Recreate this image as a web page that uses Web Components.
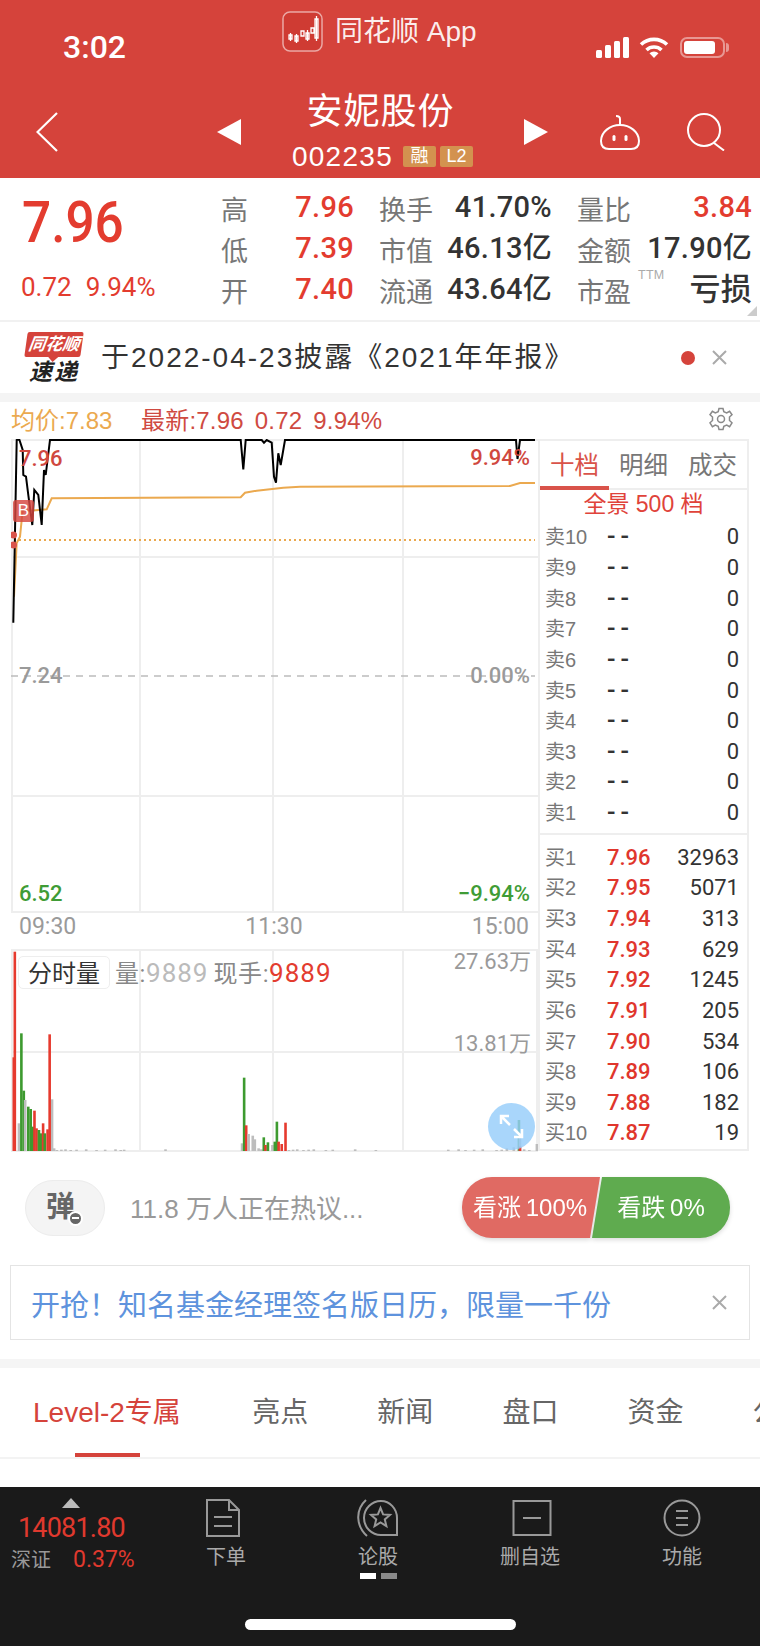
<!DOCTYPE html>
<html lang="zh">
<head>
<meta charset="utf-8">
<title>安妮股份</title>
<style>
    html, body {
        margin: 0;
        background: #fff;
    }
    body {
        width: 760px;
        height: 1646px;
        overflow: hidden;
        display: flex;
        flex-direction: column;
        font-family: "Liberation Sans", "Noto Sans CJK SC", sans-serif;
    }
</style>
</head>
<body>
<stock-header name="安妮股份" code="002235"></stock-header>
<quote-panel>
    <quote-cell label="高" red>7.96</quote-cell>
    <quote-cell label="换手">41.70%</quote-cell>
    <quote-cell label="量比" red>3.84</quote-cell>
    <quote-cell label="低" red>7.39</quote-cell>
    <quote-cell label="市值">46.13亿</quote-cell>
    <quote-cell label="金额">17.90亿</quote-cell>
    <quote-cell label="开" red>7.40</quote-cell>
    <quote-cell label="流通">43.64亿</quote-cell>
    <quote-cell label="市盈" ttm>亏损</quote-cell>
</quote-panel>
<news-strip>于2022-04-23披露《2021年年报》</news-strip>
<chart-header></chart-header>
<chart-row>
    <time-chart slot="chart"></time-chart>
    <order-book slot="book">
        <book-row slot="sell" label="卖10" price="--">0</book-row>
        <book-row slot="sell" label="卖9" price="--">0</book-row>
        <book-row slot="sell" label="卖8" price="--">0</book-row>
        <book-row slot="sell" label="卖7" price="--">0</book-row>
        <book-row slot="sell" label="卖6" price="--">0</book-row>
        <book-row slot="sell" label="卖5" price="--">0</book-row>
        <book-row slot="sell" label="卖4" price="--">0</book-row>
        <book-row slot="sell" label="卖3" price="--">0</book-row>
        <book-row slot="sell" label="卖2" price="--">0</book-row>
        <book-row slot="sell" label="卖1" price="--">0</book-row>
        <book-row slot="buy" label="买1" price="7.96">32963</book-row>
        <book-row slot="buy" label="买2" price="7.95">5071</book-row>
        <book-row slot="buy" label="买3" price="7.94">313</book-row>
        <book-row slot="buy" label="买4" price="7.93">629</book-row>
        <book-row slot="buy" label="买5" price="7.92">1245</book-row>
        <book-row slot="buy" label="买6" price="7.91">205</book-row>
        <book-row slot="buy" label="买7" price="7.90">534</book-row>
        <book-row slot="buy" label="买8" price="7.89">106</book-row>
        <book-row slot="buy" label="买9" price="7.88">182</book-row>
        <book-row slot="buy" label="买10" price="7.87">19</book-row>
    </order-book>
</chart-row>
<vote-bar></vote-bar>
<promo-banner>开抢&#65281;知名基金经理签名版日历&#65292;限量一千份</promo-banner>
<detail-tabs>
    <detail-tab active>Level-2专属</detail-tab>
    <detail-tab>亮点</detail-tab>
    <detail-tab>新闻</detail-tab>
    <detail-tab>盘口</detail-tab>
    <detail-tab>资金</detail-tab>
    <detail-tab>公司</detail-tab>
</detail-tabs>
<bottom-dock>
    <dock-item label="下单">
        <svg style="margin-right:6px" width="36" height="38" viewBox="0 0 36 38" fill="none" stroke="#999" stroke-width="2">
            <path d="M2 1H24L34 11V37H2Z"/><path d="M24 1V11H34"/><path d="M9 18H27M9 27H27"/>
        </svg>
    </dock-item>
    <dock-item label="论股" paged>
        <svg width="42" height="40" viewBox="0 0 42 40" fill="none" stroke="#999" stroke-width="2">
            <path d="M24 3C33 3 40 11 40 20V37H24A17 17 0 0 1 24 3Z"/>
            <path d="M9 2C-2 12 -1 28 10 38"/>
            <path d="M23.5 10L26.1 16.4L33 16.9L27.8 21.4L29.4 28.1L23.5 24.5L17.6 28.1L19.2 21.4L14 16.9L20.9 16.4Z"/>
        </svg>
    </dock-item>
    <dock-item label="删自选">
        <svg style="margin-left:4px" width="40" height="38" viewBox="0 0 40 38" fill="none" stroke="#999" stroke-width="2">
            <rect x="1.5" y="2" width="37" height="34"/><path d="M11 19H29"/>
        </svg>
    </dock-item>
    <dock-item label="功能">
        <svg width="38" height="38" viewBox="0 0 38 38" fill="none" stroke="#999" stroke-width="2">
            <circle cx="19" cy="19" r="17.5"/><path d="M13 12H25M13 19H25M13 26H25"/>
        </svg>
    </dock-item>
</bottom-dock>

<script>
class StockHeader extends HTMLElement {
    constructor() {
        super();
        this.attachShadow({ mode: 'open' });
        const name = this.getAttribute('name');
        const code = this.getAttribute('code');
        this.shadowRoot.innerHTML = `
            <style>
                :host {
                    display: block;
                    height: 178px;
                    background: #d5433b;
                    color: #fff;
                    flex: none;
                }
                .status {
                    height: 91px;
                    display: flex;
                    box-sizing: border-box;
                    padding-left: 63px;
                    position: relative;
                }
                .time {
                    font: 500 32px/32px Roboto, sans-serif;
                    margin-top: 31px;
                    width: 219px;
                }
                .app {
                    display: flex;
                    align-items: flex-start;
                    gap: 12px;
                    margin-top: 11px;
                    width: 314px;
                    font-size: 28px;
                    line-height: 42px;
                    color: rgba(255,255,255,.92);
                }
                .sys {
                    display: flex;
                    align-items: center;
                    gap: 10px;
                    height: 22px;
                    margin-top: 36px;
                }
                .bars {
                    display: flex;
                    align-items: flex-end;
                    gap: 3px;
                    height: 21px;
                }
                .bars i {
                    width: 6px;
                    background: #fff;
                    border-radius: 1.5px;
                }
                .battery {
                    width: 45px;
                    height: 21px;
                    box-sizing: border-box;
                    border: 2px solid rgba(255,255,255,.45);
                    border-radius: 7px;
                    padding: 2px;
                    margin-left: 1px;
                    position: relative;
                }
                .battery i {
                    display: block;
                    height: 100%;
                    width: 85%;
                    background: #fff;
                    border-radius: 3px;
                }
                .battery::after {
                    content: "";
                    position: absolute;
                    right: -6px;
                    top: 4px;
                    width: 3px;
                    height: 9px;
                    background: rgba(255,255,255,.45);
                    border-radius: 0 3px 3px 0;
                }
                .nav {
                    height: 82px;
                    display: flex;
                    align-items: center;
                    padding-left: 36px;
                }
                .back { margin-right: 159px; }
                .mid {
                    width: 283px;
                    display: flex;
                    flex-direction: column;
                    align-items: center;
                    padding-bottom: 6px;
                }
                .name {
                    font-size: 36px;
                    line-height: 42px;
                    letter-spacing: 1px;
                    margin-right: 4px;
                }
                .code {
                    display: flex;
                    align-items: center;
                    gap: 4px;
                    margin-top: 13px;
                    height: 22px;
                    font-size: 28px;
                    letter-spacing: 1.3px;
                }
                .code span {
                    margin-right: 6px;
                }
                .code b {
                    width: 33px;
                    height: 21px;
                    background: #d3924f;
                    border-radius: 2px;
                    font-size: 18px;
                    line-height: 21px;
                    font-weight: normal;
                    letter-spacing: 0;
                    text-align: center;
                }
                .robot { margin-left: 52px; }
                .search { margin-left: 46px; }
            </style>
            <div class="status">
                <div class="time">3:02</div>
                <div class="app">
                    <svg width="41" height="41" viewBox="0 0 41 41">
                        <rect x="1" y="1" width="39" height="39" rx="7" fill="#cf3b33" stroke="rgba(255,255,255,.55)" stroke-width="1.5"/>
                        <g fill="none" stroke="#fff" stroke-width="1.3">
                            <path d="M7 24h3v4H7zM8.5 22v8M13 25h3v5h-3zM14.5 23v9M19 20h3v5h-3zM24 22h3v6h-3zM25.5 19v11M29 17h3v5h-3zM33 8h3v19h-3zM34.5 5v25"/>
                        </g>
                    </svg>
                    <span>同花顺 App</span>
                </div>
                <div class="sys">
                    <div class="bars"><i style="height:8px"></i><i style="height:13px"></i><i style="height:17px"></i><i style="height:21px"></i></div>
                    <svg width="30" height="22" viewBox="0 0 30 22" fill="none" stroke="#fff" stroke-width="3.6">
                        <path d="M2 8.5A19 19 0 0 1 28 8.5"/>
                        <path d="M7.5 14A11 11 0 0 1 22.5 14"/>
                        <path d="M15 22L10.5 17.3A6.5 6.5 0 0 1 19.5 17.3Z" fill="#fff" stroke="none"/>
                    </svg>
                    <div class="battery"><i></i></div>
                </div>
            </div>
            <div class="nav">
                <svg class="back" width="22" height="40" viewBox="0 0 22 40" fill="none" stroke="#fff" stroke-width="2.2">
                    <path d="M21 1L1.5 20L21 39"/>
                </svg>
                <svg width="24" height="26" viewBox="0 0 24 26"><path d="M24 0V26L0 13Z" fill="#fff"/></svg>
                <div class="mid">
                    <div class="name">${name}</div>
                    <div class="code"><span>${code}</span><b>融</b><b>L2</b></div>
                </div>
                <svg width="24" height="26" viewBox="0 0 24 26"><path d="M0 0V26L24 13Z" fill="#fff"/></svg>
                <svg class="robot" width="40" height="36" viewBox="0 0 40 36" fill="none" stroke="#fff" stroke-width="2">
                    <path d="M20 11C30 11 39 18 39 27C39 32 36 35 31 35H9C4 35 1 32 1 27C1 18 10 11 20 11Z"/>
                    <path d="M20 11V5C20 3 18 2 16 2"/>
                    <rect x="12.5" y="21" width="3" height="6" rx="1.5" fill="#fff" stroke="none"/>
                    <rect x="24.5" y="21" width="3" height="6" rx="1.5" fill="#fff" stroke="none"/>
                </svg>
                <svg class="search" width="39" height="38" viewBox="0 0 39 38" fill="none" stroke="#fff" stroke-width="2">
                    <circle cx="18" cy="17" r="16"/><path d="M28 30L38 37.5"/>
                </svg>
            </div>
        `;
    }
}

class QuotePanel extends HTMLElement {
    constructor() {
        super();
        this.attachShadow({ mode: 'open' });
        this.shadowRoot.innerHTML = `
            <style>
                :host {
                    display: flex;
                    height: 144px;
                    box-sizing: border-box;
                    padding: 9px 0 0 22px;
                    border-bottom: 2px solid #f1f1f1;
                    flex: none;
                    position: relative;
                }
                .now {
                    width: 199px;
                    color: #e33c2f;
                    flex: none;
                }
                .big {
                    font: 500 58px/60px Roboto, sans-serif;
                    margin-top: 5px;
                    transform: scaleX(.885);
                    transform-origin: left;
                }
                .change {
                    display: flex;
                    gap: 14px;
                    font: 400 26px/30px Roboto, sans-serif;
                    margin: 20px 0 0 -1px;
                }
                .cells {
                    display: grid;
                    grid-template-columns: 133px 173px 175px;
                    grid-auto-rows: 41px;
                    column-gap: 25px;
                }
                .corner {
                    position: absolute;
                    right: 3px;
                    bottom: 4px;
                    width: 0;
                    height: 0;
                    border-left: 10px solid transparent;
                    border-bottom: 10px solid #ccc;
                }
            </style>
            <div class="now">
                <div class="big">7.96</div>
                <div class="change"><span>0.72</span><span>9.94%</span></div>
            </div>
            <div class="cells"><slot></slot></div>
            <div class="corner"></div>
        `;
    }
}

class QuoteCell extends HTMLElement {
    constructor() {
        super();
        this.attachShadow({ mode: 'open' });
        const ttm = this.hasAttribute('ttm') ? '<small>TTM</small>' : '';
        this.shadowRoot.innerHTML = `
            <style>
                :host {
                    display: flex;
                    justify-content: space-between;
                    align-items: center;
                    position: relative;
                    color: #333;
                    font: 500 29px/41px Roboto, "Noto Sans CJK SC", sans-serif;
                    letter-spacing: .3px;
                    white-space: nowrap;
                }
                :host([red]) {
                    color: #e33c2f;
                }
                :host([ttm]) {
                    font-size: 31px;
                }
                .label {
                    font: 400 27px/41px "Noto Sans CJK SC", sans-serif;
                    letter-spacing: 0;
                    color: #777;
                    margin-top: 2px;
                }
                small {
                    position: absolute;
                    left: 61px;
                    top: 0;
                    font: 400 12.5px/12px "Liberation Sans", sans-serif;
                    color: #aaa;
                }
            </style>
            <span class="label">${this.getAttribute('label')}</span>${ttm}
            <span><slot></slot></span>
        `;
    }
}

class NewsStrip extends HTMLElement {
    constructor() {
        super();
        this.attachShadow({ mode: 'open' });
        this.shadowRoot.innerHTML = `
            <style>
                :host {
                    display: flex;
                    align-items: center;
                    height: 71px;
                    padding-left: 25px;
                    border-bottom: 9px solid #f4f4f4;
                    flex: none;
                    color: #333;
                }
                .logo {
                    width: 58px;
                    display: flex;
                    flex-direction: column;
                    align-items: center;
                    margin-right: 18px;
                    position: relative;
                }
                .tag {
                    width: 56px;
                    height: 25px;
                    background: #d5433b;
                    border-radius: 2px;
                    transform: skewX(-8deg);
                    color: #fff;
                    font-size: 17px;
                    line-height: 25px;
                    font-weight: bold;
                    font-style: italic;
                    text-align: center;
                    position: relative;
                }
                .tag::after {
                    content: "";
                    position: absolute;
                    left: 24px;
                    bottom: -5px;
                    border: 5px solid transparent;
                    border-bottom: 0;
                    border-top-color: #d5433b;
                }
                .sub {
                    font-size: 23px;
                    line-height: 24px;
                    font-weight: bold;
                    font-style: italic;
                    color: #222;
                    margin-top: 3px;
                    letter-spacing: 2px;
                }
                .text {
                    font-size: 28px;
                    letter-spacing: 2px;
                    white-space: nowrap;
                    flex: 1;
                    padding-bottom: 5px;
                }
                .dot {
                    width: 14px;
                    height: 14px;
                    border-radius: 50%;
                    background: #d5433b;
                    margin-right: 17px;
                }
                svg { margin-right: 33px; }
            </style>
            <div class="logo"><div class="tag">同花顺</div><div class="sub">速递</div></div>
            <div class="text"><slot></slot></div>
            <div class="dot"></div>
            <svg width="15" height="15" viewBox="0 0 15 15" stroke="#aaa" stroke-width="2"><path d="M1 1L14 14M14 1L1 14"/></svg>
        `;
    }
}

class ChartHeader extends HTMLElement {
    constructor() {
        super();
        this.attachShadow({ mode: 'open' });
        this.shadowRoot.innerHTML = `
            <style>
                :host {
                    display: flex;
                    align-items: center;
                    height: 37px;
                    box-sizing: border-box;
                    padding: 1px 27px 0 11px;
                    font-size: 24px;
                    line-height: 30px;
                    white-space: nowrap;
                    flex: none;
                }
                .avg { color: #eba94f; width: 130px; }
                .last { color: #cf4a41; display: flex; align-items: baseline; gap: 11px; flex: 1; letter-spacing: .2px; }
                svg { margin-top: -4px; }
            </style>
            <div class="avg">均价:7.83</div>
            <div class="last"><span>最新:7.96</span><span>0.72</span><span>9.94%</span></div>
            <svg width="24" height="24" viewBox="0 0 24 24" fill="none" stroke="#8a8a8a" stroke-width="1.5">
                <path d="M10 1.5H14L14.8 4.8L17.7 6L20.6 4.3L23 7.7L20.5 10L20.5 13.5L23 15.8L20.6 19.7L17.7 18L14.8 19.2L14 22.5H10L9.2 19.2L6.3 18L3.4 19.7L1 15.8L3.5 13.5L3.5 10L1 7.7L3.4 4.3L6.3 6L9.2 4.8Z"/>
                <circle cx="12" cy="12" r="3.5"/>
            </svg>
        `;
    }
}

class ChartRow extends HTMLElement {
    constructor() {
        super();
        this.attachShadow({ mode: 'open' });
        this.shadowRoot.innerHTML = `
            <style>
                :host {
                    display: flex;
                    height: 713px;
                    padding-left: 11px;
                    flex: none;
                }
            </style>
            <slot name="chart"></slot>
            <slot name="book"></slot>
        `;
    }
}

class TimeChart extends HTMLElement {
    constructor() {
        super();
        this.attachShadow({ mode: 'open' });
        const black = '13.3,622.7 16.7,440 19.3,439.5 22.7,450 23.3,475 26,476.7 28.3,495 32.3,525 34.3,490 38.3,495 41.7,525 44,470 45.7,475 50,440 240.7,440 243.3,469.3 245.7,440 261.7,440 264,442.7 266.7,440 271.7,442.7 274,476.7 276,482.7 278.3,453.3 280.7,465 285,440 516,440 517.5,459 520,440 535,440';
        const avg = '14,596.7 16.7,543 20,536.7 22.7,510 30,510.7 46.7,509.3 51.7,498.3 240.7,497.3 245,492.7 256.7,490.7 283.3,487.7 300,486.7 510,486 520,483 535,483';
        this.shadowRoot.innerHTML = `
            <style>
                :host {
                    display: flex;
                    flex-direction: column;
                    width: 527px;
                    flex: none;
                }
                .plot, .vol {
                    position: relative;
                    flex: none;
                }
                .plot { height: 474px; }
                .vol { height: 203px; }
                svg { display: block; }
                .axis {
                    display: flex;
                    justify-content: space-between;
                    height: 36px;
                    box-sizing: border-box;
                    padding: 1px 9px 0 8px;
                    font: 400 23px/26px Roboto, sans-serif;
                    color: #9a9a9a;
                    flex: none;
                }
                .tag {
                    position: absolute;
                    font: 500 22px/24px Roboto, sans-serif;
                    white-space: nowrap;
                }
                .l { left: 8px; }
                .r { right: 8px; }
                .red { color: #d0483f; }
                .gray { color: #9a9a9a; }
                .green { color: #3f9c36; }
                .b {
                    position: absolute;
                    left: 2px;
                    top: 61px;
                    width: 21px;
                    height: 22px;
                    background: rgba(214,70,62,.82);
                    border-radius: 3px;
                    color: #fff;
                    font-size: 17px;
                    line-height: 22px;
                    text-align: center;
                }
                .kind {
                    position: absolute;
                    left: 7px;
                    top: 7px;
                    width: 92px;
                    height: 33px;
                    box-sizing: border-box;
                    border: 1.5px solid #eee;
                    border-radius: 5px;
                    background: #fff;
                    color: #333;
                    font: 400 24px/30px "Noto Sans CJK SC", sans-serif;
                    text-align: center;
                }
                .now {
                    position: absolute;
                    left: 104px;
                    top: 9px;
                    font: 400 24px/30px Roboto, "Noto Sans CJK SC", sans-serif;
                    color: #888;
                    white-space: nowrap;
                    letter-spacing: .6px;
                }
                .now b, .now em {
                    font-size: 26px;
                    font-weight: 400;
                    letter-spacing: 1px;
                }
                .now b {
                    color: #bbb;
                    margin-right: 5px;
                }
                .now em {
                    font-style: normal;
                    color: #e33c2f;
                }
                .scale {
                    position: absolute;
                    right: 7px;
                    font: 400 22px/26px Roboto, "Noto Sans CJK SC", sans-serif;
                    color: #9a9a9a;
                }
                .fab {
                    position: absolute;
                    left: 477px;
                    top: 154px;
                    width: 47px;
                    height: 47px;
                    border-radius: 50%;
                    background: rgba(150,205,250,.82);
                }
            </style>
            <div class="plot">
                <svg width="527" height="474" viewBox="11 439 527 474" fill="none">
                    <path d="M11 440H538M11 557H538M11 796H538M11 912H538M12 439V913M140 439V913M273 439V913M403 439V913" stroke="#eeeeee" stroke-width="2"/>
                    <path d="M11 676H535" stroke="#bcbcbc" stroke-width="1.5" stroke-dasharray="7 6"/>
                    <path d="M14 540H535" stroke="#eba94f" stroke-width="2" stroke-dasharray="2 3"/>
                    <polyline points="${avg}" stroke="#eba94f" stroke-width="2"/>
                    <polyline points="${black}" stroke="#000" stroke-width="2"/>
                    <circle cx="13.5" cy="535" r="3.5" fill="#d9544b"/>
                    <circle cx="13.5" cy="545" r="3.5" fill="#d9544b"/>
                </svg>
                <div class="b">B</div>
                <span class="tag l red" style="top:8px">7.96</span>
                <span class="tag r red" style="top:7px">9.94%</span>
                <span class="tag l gray" style="top:225px">7.24</span>
                <span class="tag r gray" style="top:225px">0.00%</span>
                <span class="tag l green" style="top:443px">6.52</span>
                <span class="tag r green" style="top:443px">−9.94%</span>
            </div>
            <div class="axis"><span>09:30</span><span>11:30</span><span>15:00</span></div>
            <div class="vol">
                <svg width="527" height="203" viewBox="11 949 527 203" fill="none">
                    <path d="M11 950H538M11 1052H538M11 1151H538M12 949V1152M140 949V1152M273 949V1152M403 949V1152M537 949V1152" stroke="#eeeeee" stroke-width="2"/>
                    <g class="bars"></g>
                </svg>
                <div class="kind">分时量</div>
                <div class="now">量:<b>9889</b>现手:<em>9889</em></div>
                <span class="scale" style="top:0">27.63万</span>
                <span class="scale" style="top:82px">13.81万</span>
                <div class="fab">
                    <svg width="47" height="47" viewBox="0 0 47 47" fill="none" stroke="#fff" stroke-width="2.5">
                        <path d="M13 13L22 22M13 21V13H21M26 26L34 34M34 26V34H26"/>
                    </svg>
                </div>
            </div>
        `;
    }

    connectedCallback() {
        // values are read off the reference: x and top in zoom units, bottom fixed at 1151
        const r = '#e63a2e', g = '#3d9a2f', s = '#bdbdbd';
        const bars = [
            [40, 352, r], [43, 35, r], [55, 550, s], [62, 280, g], [69, 452, g], [73, 480, s],
            [82, 500, g], [89, 507, g], [96, 560, g], [100, 512, r], [106, 565, r], [113, 570, g],
            [119, 580, g], [125, 550, r], [130, 580, g], [138, 568, r], [151, 478, s], [144, 283, r],
            [157, 625, s], [702, 610, s], [708, 413, g], [714, 556, r], [721, 582, s], [733, 587, s],
            [739, 598, s], [750, 625, s], [758, 628, s], [765, 592, g], [770, 615, r], [777, 607, g],
            [790, 615, s], [797, 605, g], [803, 545, g], [808, 605, r], [817, 612, r], [828, 548, r],
            [1505, 540, g], [1508, 592, s], [1508, 620, r], [1470, 625, s], [1490, 622, s], [1557, 612, s]
        ];
        [165, 178, 190, 205, 222, 250, 280, 305, 335, 350, 360, 480, 838, 850, 862, 880, 895, 910, 945,
            965, 1030, 1090, 1300, 1330, 1350, 1375, 1400, 1440, 1455, 1520, 1535].forEach((x, i) => {
            bars.push([x, 630 - (i % 3), s]);
        });
        const group = this.shadowRoot.querySelector('.bars');
        group.innerHTML = bars.map(([x, top, color]) => {
            const rx = x / 2.9;
            const ry = 940 + top / 3;
            return `<rect x="${rx - 1.3}" y="${ry}" width="2.6" height="${1151 - ry}" fill="${color}"/>`;
        }).join('');
    }
}

class OrderBook extends HTMLElement {
    constructor() {
        super();
        this.attachShadow({ mode: 'open' });
        this.shadowRoot.innerHTML = `
            <style>
                :host {
                    display: flex;
                    flex-direction: column;
                    width: 211px;
                    height: 712px;
                    box-sizing: border-box;
                    border: 2px solid #eee;
                    flex: none;
                }
                .tabs {
                    display: flex;
                    height: 47px;
                    border-bottom: 2px solid #eee;
                    position: relative;
                    flex: none;
                }
                .tabs span {
                    flex: 1;
                    text-align: center;
                    font: 400 24.5px/46px "Noto Sans CJK SC", sans-serif;
                    color: #777;
                }
                .tabs .on {
                    color: #d9534a;
                }
                .tabs::after {
                    content: "";
                    position: absolute;
                    left: 0;
                    bottom: -2px;
                    width: 69px;
                    height: 4px;
                    background: #d9534a;
                }
                .all {
                    height: 33px;
                    text-align: center;
                    color: #e0433a;
                    font-size: 23px;
                    line-height: 29px;
                    flex: none;
                }
                .group {
                    display: flex;
                    flex-direction: column;
                    margin-top: -1px;
                }
                .line {
                    height: 2px;
                    background: #eee;
                    margin: 5px 0 8px;
                    flex: none;
                }
            </style>
            <div class="tabs"><span class="on">十档</span><span>明细</span><span>成交</span></div>
            <div class="all">全景 500 档</div>
            <div class="group"><slot name="sell"></slot></div>
            <div class="line"></div>
            <div class="group"><slot name="buy"></slot></div>
        `;
    }
}

class BookRow extends HTMLElement {
    constructor() {
        super();
        this.attachShadow({ mode: 'open' });
        const price = this.getAttribute('price');
        const empty = price === '--';
        this.shadowRoot.innerHTML = `
            <style>
                :host {
                    display: grid;
                    grid-template-columns: 62px 1fr auto;
                    align-items: center;
                    height: 30.65px;
                    padding: 0 8px 0 5px;
                    font: 400 22px/30px Roboto, sans-serif;
                    color: #333;
                }
                .label {
                    font: 400 20px/30px "Liberation Sans", "Noto Sans CJK SC", sans-serif;
                    color: #777;
                    white-space: nowrap;
                }
                .price {
                    font-weight: 500;
                    color: ${empty ? '#333' : '#e0362c'};
                    letter-spacing: ${empty ? '5px' : '0'};
                    font-size: ${empty ? '25px' : '22px'};
                }
            </style>
            <span class="label">${this.getAttribute('label')}</span>
            <span class="price">${price}</span>
            <span><slot></slot></span>
        `;
    }
}

class VoteBar extends HTMLElement {
    constructor() {
        super();
        this.attachShadow({ mode: 'open' });
        this.shadowRoot.innerHTML = `
            <style>
                :host {
                    display: flex;
                    align-items: center;
                    height: 113px;
                    padding: 0 0 2px 25px;
                    box-sizing: border-box;
                    flex: none;
                }
                .danmu {
                    width: 80px;
                    height: 56px;
                    box-sizing: border-box;
                    border: 1px solid #ececec;
                    border-radius: 28px;
                    background: #f4f4f4;
                    color: #666;
                    font-size: 29px;
                    font-weight: bold;
                    line-height: 52px;
                    padding-right: 9px;
                    text-align: center;
                    position: relative;
                    margin-right: 25px;
                }
                .danmu::after {
                    content: "";
                    position: absolute;
                    left: 42px;
                    top: 30px;
                    width: 11px;
                    height: 11px;
                    border-radius: 50%;
                    background: #666;
                    border: 2px solid #fff;
                    box-sizing: content-box;
                    background-image: linear-gradient(#fff, #fff);
                    background-size: 7px 2px;
                    background-position: center;
                    background-repeat: no-repeat;
                }
                .hint {
                    width: 332px;
                    color: #999;
                    font-size: 26px;
                    white-space: nowrap;
                    padding-bottom: 2px;
                }
                .pills {
                    display: flex;
                    height: 61px;
                    width: 268px;
                    filter: drop-shadow(0 2px 2px rgba(0,0,0,.14));
                }
                .up, .down {
                    width: 138px;
                    color: #fff;
                    font-size: 24px;
                    line-height: 61px;
                    text-align: center;
                    white-space: nowrap;
                    box-sizing: border-box;
                }
                .up {
                    background: #e06a63;
                    border-radius: 30px 0 0 30px;
                    clip-path: polygon(0 0, 100% 0, calc(100% - 10px) 100%, 0 100%);
                    padding-right: 2px;
                }
                .down {
                    background: #5fab4f;
                    border-radius: 0 30px 30px 0;
                    clip-path: polygon(10px 0, 100% 0, 100% 100%, 0 100%);
                    margin-left: -8px;
                }
            </style>
            <div class="danmu">弹</div>
            <div class="hint">11.8 万人正在热议...</div>
            <div class="pills"><div class="up">看涨&#8201;100%</div><div class="down">看跌&#8201;0%</div></div>
        `;
    }
}

class PromoBanner extends HTMLElement {
    constructor() {
        super();
        this.attachShadow({ mode: 'open' });
        this.shadowRoot.innerHTML = `
            <style>
                :host {
                    display: flex;
                    align-items: center;
                    justify-content: space-between;
                    height: 75px;
                    margin: 0 10px;
                    box-sizing: border-box;
                    padding: 0 22px 0 20px;
                    border: 1.5px solid #e4e4e4;
                    color: #5e93dd;
                    font-size: 29px;
                    white-space: nowrap;
                    flex: none;
                }
            </style>
            <span><slot></slot></span>
            <svg width="15" height="15" viewBox="0 0 15 15" stroke="#aaa" stroke-width="2"><path d="M1 1L14 14M14 1L1 14"/></svg>
        `;
    }
}

class DetailTabs extends HTMLElement {
    constructor() {
        super();
        this.attachShadow({ mode: 'open' });
        this.shadowRoot.innerHTML = `
            <style>
                :host {
                    display: flex;
                    gap: 69px;
                    height: 100px;
                    box-sizing: border-box;
                    margin-top: 19px;
                    border-top: 9px solid #f5f5f5;
                    border-bottom: 2px solid #f3f3f3;
                    padding-left: 33px;
                    overflow: hidden;
                    flex: none;
                }
            </style>
            <slot></slot>
        `;
    }
}

class DetailTab extends HTMLElement {
    constructor() {
        super();
        this.attachShadow({ mode: 'open' });
        this.shadowRoot.innerHTML = `
            <style>
                :host {
                    display: block;
                    position: relative;
                    font-size: 28px;
                    line-height: 90px;
                    color: #666;
                    white-space: nowrap;
                    flex: none;
                }
                :host([active]) {
                    color: #d5433b;
                    margin-right: 2.5px;
                }
                :host([active])::after {
                    content: "";
                    position: absolute;
                    left: 42px;
                    bottom: 0;
                    width: 65px;
                    height: 4px;
                    background: #d5433b;
                }
            </style>
            <slot></slot>
        `;
    }
}

class BottomDock extends HTMLElement {
    constructor() {
        super();
        this.attachShadow({ mode: 'open' });
        this.shadowRoot.innerHTML = `
            <style>
                :host {
                    display: flex;
                    flex-direction: column;
                    height: 159px;
                    margin-top: 28px;
                    background: #1a1a1a;
                    flex: none;
                }
                .row {
                    display: grid;
                    grid-template-columns: 150px repeat(4, 152px);
                }
                .index {
                    padding: 11px 0 0 11px;
                    white-space: nowrap;
                }
                .arrow {
                    width: 0;
                    height: 0;
                    margin-left: 51px;
                    border: 9px solid transparent;
                    border-top: 0;
                    border-bottom: 10px solid #bbb;
                }
                .value {
                    margin: 5px 0 5px 7px;
                    font: 400 27px/30px Roboto, sans-serif;
                    color: #e0392e;
                    letter-spacing: -.8px;
                }
                .sub {
                    display: flex;
                    gap: 22px;
                    font-size: 20px;
                    line-height: 24px;
                    color: #999;
                }
                .sub span {
                    font: 400 23px/24px Roboto, sans-serif;
                    color: #e0392e;
                }
                .home {
                    width: 271px;
                    height: 11px;
                    border-radius: 6px;
                    background: #fff;
                    margin: auto auto 16px;
                }
            </style>
            <div class="row">
                <div class="index">
                    <div class="arrow"></div>
                    <div class="value">14081.80</div>
                    <div class="sub">深证<span>0.37%</span></div>
                </div>
                <slot></slot>
            </div>
            <div class="home"></div>
        `;
    }
}

class DockItem extends HTMLElement {
    constructor() {
        super();
        this.attachShadow({ mode: 'open' });
        const dots = this.hasAttribute('paged') ? '<div class="dots"><i></i><i></i></div>' : '';
        this.shadowRoot.innerHTML = `
            <style>
                :host {
                    display: flex;
                    flex-direction: column;
                    align-items: center;
                    padding-top: 11px;
                    color: #aaa;
                    font-size: 20px;
                }
                .icon {
                    height: 40px;
                    display: flex;
                    align-items: center;
                }
                .label {
                    line-height: 24px;
                    margin-top: 7px;
                }
                .dots {
                    display: flex;
                    gap: 5px;
                    margin-top: 4px;
                }
                .dots i {
                    width: 16px;
                    height: 6px;
                    background: #8a8a8a;
                }
                .dots i:first-child {
                    background: #fff;
                }
            </style>
            <div class="icon"><slot></slot></div>
            <div class="label">${this.getAttribute('label')}</div>
            ${dots}
        `;
    }
}

customElements.define('stock-header', StockHeader);
customElements.define('quote-panel', QuotePanel);
customElements.define('quote-cell', QuoteCell);
customElements.define('news-strip', NewsStrip);
customElements.define('chart-header', ChartHeader);
customElements.define('chart-row', ChartRow);
customElements.define('time-chart', TimeChart);
customElements.define('order-book', OrderBook);
customElements.define('book-row', BookRow);
customElements.define('vote-bar', VoteBar);
customElements.define('promo-banner', PromoBanner);
customElements.define('detail-tabs', DetailTabs);
customElements.define('detail-tab', DetailTab);
customElements.define('bottom-dock', BottomDock);
customElements.define('dock-item', DockItem);
</script>
</body>
</html>
